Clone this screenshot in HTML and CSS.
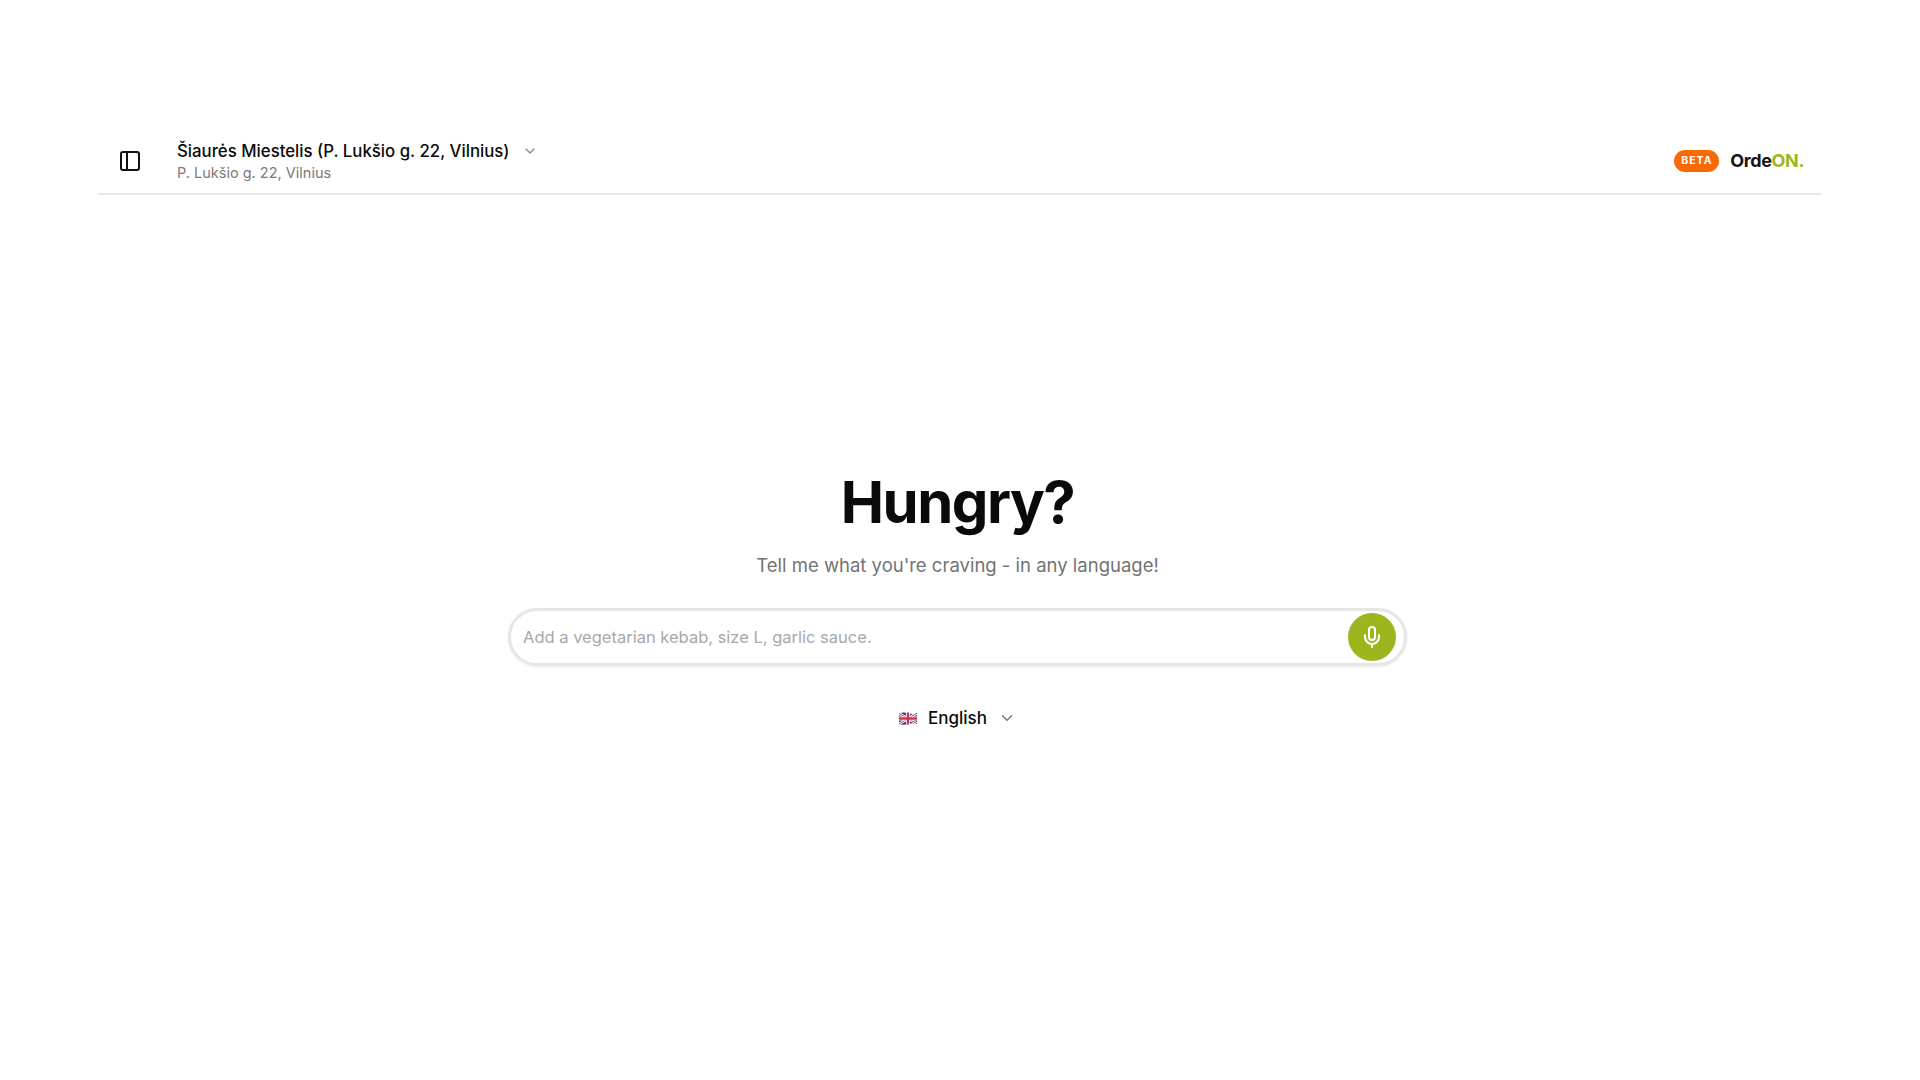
FILE: index.html
```html
<!DOCTYPE html>
<html lang="en">
<head>
<meta charset="utf-8">
<title>OrdeON</title>
<link rel="stylesheet" href="styles.css">
</head>
<body>
<div class="page">
  <header class="topbar">
    <div class="topbar-left">
      <button class="icon-btn" aria-label="Toggle sidebar">
        <svg width="24" height="24" viewBox="0 0 24 24" fill="none" stroke="#111" stroke-width="2" stroke-linecap="round" stroke-linejoin="round"><rect x="3" y="3" width="18" height="18" rx="2"/><path d="M9 3v18"/></svg>
      </button>
      <div class="location">
        <div class="location-row">
          <span class="location-name">Šiaurės Miestelis (P. Lukšio g. 22, Vilnius)</span>
          <svg class="chev" width="16" height="16" viewBox="0 0 24 24" fill="none" stroke="#8a8a8a" stroke-width="2" stroke-linecap="round" stroke-linejoin="round"><path d="m6 9 6 6 6-6"/></svg>
        </div>
        <div class="location-sub">P. Lukšio g. 22, Vilnius</div>
      </div>
    </div>
    <div class="brand">
      <span class="beta">BETA</span>
      <span class="logo">Orde<span class="logo-on">ON.</span></span>
    </div>
  </header>
  <main class="hero">
    <h1 class="title">Hungry?</h1>
    <p class="subtitle">Tell me what you're craving - in any language!</p>
    <div class="search">
      <span class="placeholder">Add a vegetarian kebab, size L, garlic sauce.</span>
      <button class="mic" aria-label="Voice input">
        <svg width="24" height="24" viewBox="0 0 24 24" fill="none" stroke="#fff" stroke-width="2" stroke-linecap="round" stroke-linejoin="round"><path d="M12 2a3 3 0 0 0-3 3v7a3 3 0 0 0 6 0V5a3 3 0 0 0-3-3Z"/><path d="M19 10v2a7 7 0 0 1-14 0v-2"/><path d="M12 19v3"/></svg>
      </button>
    </div>
    <div class="lang">
      <svg class="flag" width="18" height="13" viewBox="0 0 18 13">
        <path d="M0 1.2Q4.5-.4 9 1.2T18 1.2V12Q13.500 10.400 9 12T0 12Z" fill="#2b3f86"/>
        <path d="M0 1.500 18 11.700M18 1.200 0 12" stroke="#fff" stroke-width="2.600"/>
        <path d="M0 1.500 18 11.700M18 1.200 0 12" stroke="#d0324b" stroke-width="1"/>
        <path d="M9 .5V12.500M0 6.500H18" stroke="#fff" stroke-width="4.200"/>
        <path d="M9 .5V12.500M0 6.500H18" stroke="#d0324b" stroke-width="2.400"/>
      </svg>
      <span class="lang-name">English</span>
      <svg width="18" height="18" viewBox="0 0 24 24" fill="none" stroke="#777" stroke-width="2" stroke-linecap="round" stroke-linejoin="round"><path d="m6 9 6 6 6-6"/></svg>
    </div>
  </main>
</div>
</body>
</html>
```

FILE: styles.css
```css
* { box-sizing: border-box; }
html, body { margin: 0; height: 100%; background: #fff; }
body { font-family: Inter, "Liberation Sans", sans-serif; color: #0a0a0a; }
.page { width: 1723px; margin-left: 98px; padding-top: 128px; }
.topbar { height: 67px; display: flex; align-items: center; justify-content: space-between; border-bottom: 2px solid #e8e8e8; padding: 0 17px 0 20px; }
.topbar-left { display: flex; align-items: center; gap: 34px; }
.icon-btn { width: 24px; height: 24px; padding: 0; border: 0; background: none; display: flex; }
.location { display: flex; flex-direction: column; padding-bottom: 3px; }
.location-row { display: flex; align-items: center; gap: 12px; }
.location-name { margin-left: 1px; font-size: 16.8px; line-height: 27px; font-weight: 500; white-space: nowrap; }
.location-sub { margin-left: 1px; font-size: 14.5px; line-height: 16px; color: #7a7a7a; }
.brand { display: flex; align-items: center; gap: 11px; }
.beta { width: 45px; height: 22px; border-radius: 11px; background: #f96a06; color: #fff; font-size: 10.500px; font-weight: 700; letter-spacing: 1px; display: flex; align-items: center; justify-content: center; }
.logo { font-size: 18px; font-weight: 700; color: #151515; letter-spacing: -0.4px; }
.logo-on { color: #9cb71d; }
.hero { display: flex; flex-direction: column; align-items: center; width: 899px; margin-left: 410px; padding-top: 277px; }
.title { margin: 0; font-size: 58px; line-height: 60px; font-weight: 700; letter-spacing: -1.5px; }
.subtitle { margin: 19px 0 0; font-size: 18.5px; line-height: 28px; color: #737373; }
.search { width: 899px; height: 58px; margin-top: 29px; padding: 0 8px 0 12px; border: 3px solid #e6e6e6; border-radius: 29px; display: flex; align-items: center; justify-content: space-between; box-shadow: 0 1px 3px rgba(0,0,0,.08); }
.placeholder { font-size: 16.5px; color: #a8a8a8; }
.mic { width: 48px; height: 48px; border: 0; padding: 0; border-radius: 50%; background: #9cb71d; display: flex; align-items: center; justify-content: center; }
.lang { display: flex; align-items: center; margin-top: 40px; height: 24px; }
.flag { margin-right: 11px; }
.lang-name { font-size: 17px; font-weight: 500; margin-right: 11px; }
```
